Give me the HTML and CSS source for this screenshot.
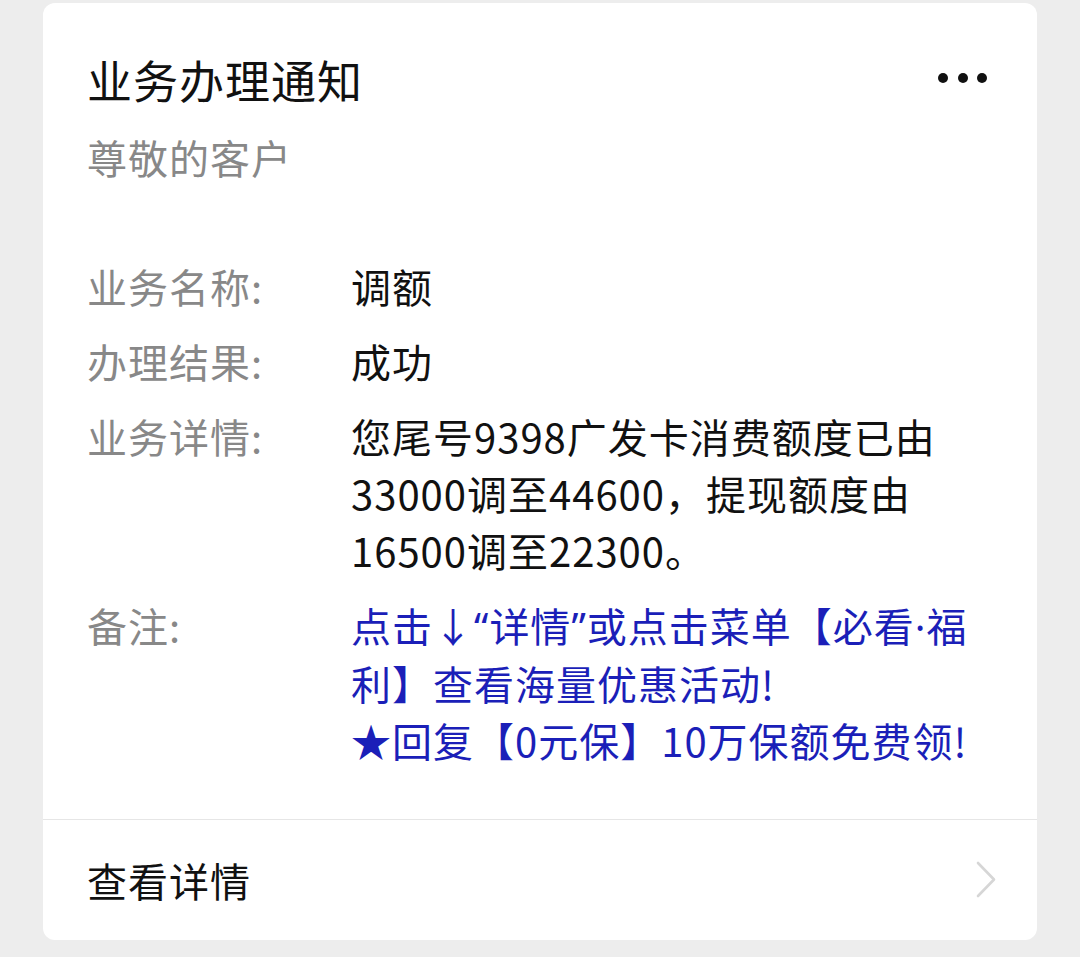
FILE: index.html
```html
<!DOCTYPE html>
<html lang="zh-CN">
<head>
<meta charset="utf-8">
<link rel="stylesheet" href="styles.css">
</head>
<body>
<div class="card">
  <div class="body">
    <div class="head">
      <div class="title">业务办理通知</div>
      <div class="more"><span class="dot"></span><span class="dot"></span><span class="dot"></span></div>
    </div>
    <div class="greet">尊敬的客户</div>
    <div class="rows">
      <div class="row"><div class="label">业务名称:</div><div class="value">调额</div></div>
      <div class="row"><div class="label">办理结果:</div><div class="value">成功</div></div>
      <div class="row"><div class="label">业务详情:</div><div class="value">您尾号9398广发卡消费额度已由33000调至44600，提现额度由16500调至22300。</div></div>
      <div class="row"><div class="label">备注:</div><div class="value blue"><p>点击↓<span class="latin">“</span>详情<span class="latin">”</span>或点击菜单【必看<span class="latin">·</span>福利】查看海量优惠活动!</p><p>★回复【0元保】10万保额免费领!</p></div></div>
    </div>
  </div>
  <div class="foot">
    <span class="foot-text">查看详情</span>
    <svg class="chev" width="24" height="40" viewBox="0 0 24 40"><path d="M4 3 L20 19.5 L4 36" fill="none" stroke="#d6d6d6" stroke-width="2.6" stroke-linecap="round" stroke-linejoin="round"/></svg>
  </div>
</div>
</body>
</html>
```

FILE: styles.css
```css
* { box-sizing: border-box; }
html, body { margin: 0; padding: 0; }
body {
  background: #ededed;
  font-family: "Noto Sans CJK SC", "Noto Sans", sans-serif;
  width: 1080px;
  height: 957px;
  overflow: hidden;
}
.card {
  margin: 3px 0 0 43px;
  width: 994px;
  height: 937px;
  background: #fff;
  border-radius: 12px;
  display: flex;
  flex-direction: column;
  letter-spacing: 1px;
}
.body {
  padding: 45px 50px 50px 44px;
  border-bottom: 1px solid #e6e6e6;
}
.head {
  display: flex;
  align-items: center;
  justify-content: space-between;
}
.title {
  font-size: 45px;
  line-height: 63px;
  color: #111;
}
.more {
  display: flex;
  gap: 9.5px;
  margin-top: -3px;
}
.dot {
  width: 10px;
  height: 10px;
  border-radius: 50%;
  background: #111;
}
.greet {
  margin-top: 18px;
  font-size: 40px;
  line-height: 56px;
  color: #888;
}
.rows {
  margin-top: 73px;
  display: flex;
  flex-direction: column;
  gap: 18px;
}
.row {
  display: flex;
  font-size: 40px;
  line-height: 57px;
}
.label {
  width: 264px;
  flex: none;
  color: #888;
}
.value {
  width: 640px;
  color: #111;
}
.value p { margin: 0; }
.latin { font-family: "Noto Sans", sans-serif; }
.blue { color: #1b1fb8; }
.foot {
  flex: 1;
  display: flex;
  align-items: center;
  justify-content: space-between;
  padding: 0 39px 0 44px;
}
.foot-text {
  font-size: 40px;
  line-height: 56px;
  color: #111;
}
```
